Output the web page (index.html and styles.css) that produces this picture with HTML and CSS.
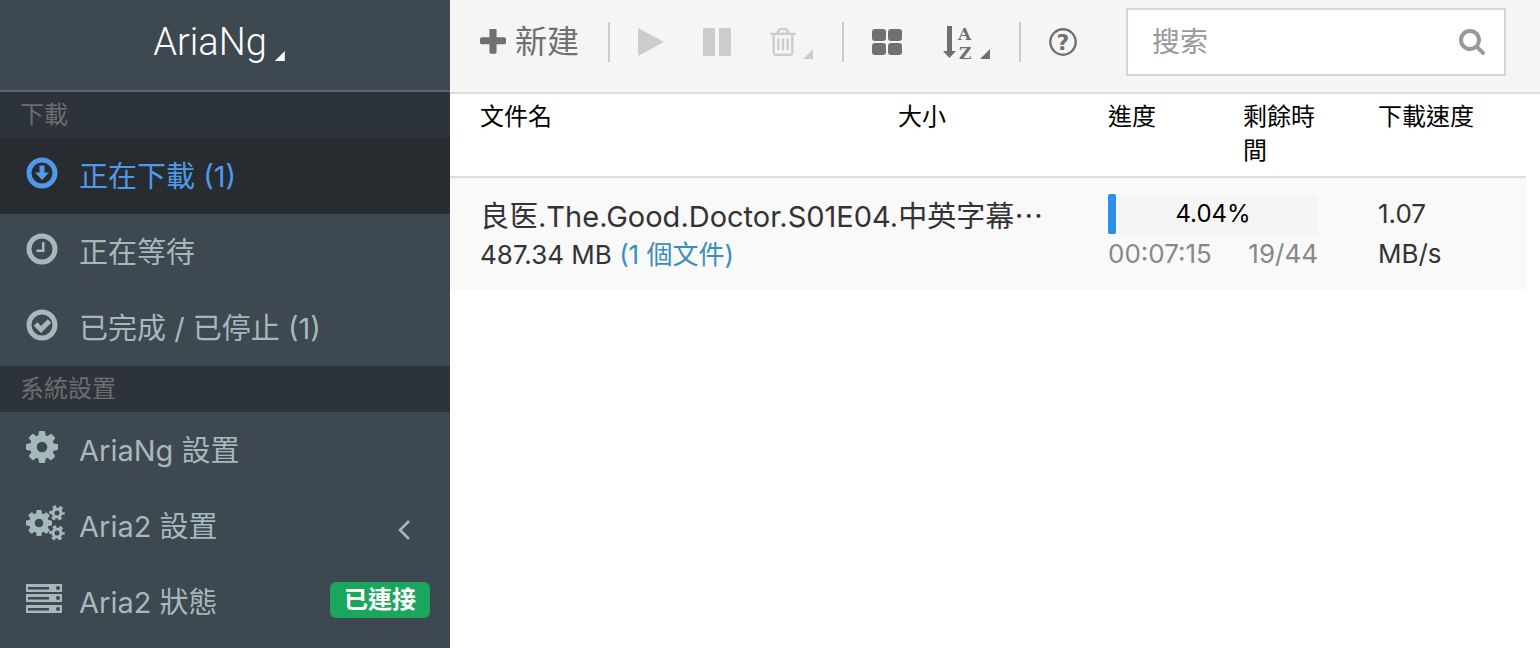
FILE: index.html
```
<!DOCTYPE html>
<html lang="zh-Hant">
<head>
  <meta charset="UTF-8">
  <meta name="viewport" content="width=device-width, initial-scale=1">
  <title>AriaNg</title>
  <link rel="stylesheet" href="styles.css">
</head>
<body>
  <svg class="defs" aria-hidden="true">
    <symbol id="cog" viewBox="128 128 1536 1536">
      <path d="M1152 896q0-106-75-181t-181-75-181 75-75 181 75 181 181 75 181-75 75-181zm512-109v222q0 12-8 23t-20 13l-185 28q-19 54-39 91 35 50 107 138 10 12 10 25t-9 23q-27 37-99 108t-94 71q-12 0-26-9l-138-108q-44 23-91 38-16 136-29 186-7 28-36 28h-222q-14 0-24.5-8.5t-11.5-21.5l-28-184q-49-16-90-37l-141 107q-10 9-25 9-14 0-25-11-126-114-165-168-7-10-7-23 0-12 8-23 15-21 51-66.5t54-70.5q-27-50-41-99l-183-27q-13-2-21-12.5t-8-23.5v-222q0-12 8-23t19-13l186-28q14-46 39-92-40-57-107-138-10-12-10-24 0-10 9-23 26-36 98.5-107.5t94.5-71.5q13 0 26 10l138 107q44-23 91-38 16-136 29-186 7-28 36-28h222q14 0 24.5 8.5t11.5 21.5l28 184q49 16 90 37l142-107q9-9 24-9 13 0 25 10 129 119 165 170 7 8 7 22 0 12-8 23-15 21-51 66.5t-54 70.5q26 50 41 98l183 28q13 2 21 12.5t8 23.5z"/>
    </symbol>
  </svg>

  <aside class="sidebar">
    <a class="logo" href="#about">AriaNg<i class="caret"></i></a>
    <nav>
      <h2 class="nav-header">下載</h2>
      <ul class="menu">
        <li><a class="active" href="#downloading">
          <svg class="icon" viewBox="0 0 40 36"><circle cx="16" cy="18" r="13" fill="none" stroke="currentColor" stroke-width="5"/><path d="M13.500 10.500h5v7h4.500L16 25L9 17.500h4.500z"/></svg>
          <span>正在下載 (1)</span>
        </a></li>
        <li><a href="#waiting">
          <svg class="icon" viewBox="0 0 40 36"><circle cx="16" cy="18" r="13" fill="none" stroke="currentColor" stroke-width="5"/><path d="M16 11h2.500v10h-8v-2.500H16z"/></svg>
          <span>正在等待</span>
        </a></li>
        <li><a href="#stopped">
          <svg class="icon" viewBox="0 0 40 36"><circle cx="16" cy="18" r="13" fill="none" stroke="currentColor" stroke-width="5"/><path d="M9.500 17L15 22.500L23.500 14" fill="none" stroke="currentColor" stroke-width="5"/></svg>
          <span>已完成 / 已停止 (1)</span>
        </a></li>
      </ul>
      <h2 class="nav-header">系統設置</h2>
      <ul class="menu">
        <li><a href="#settings-ariang">
          <svg class="icon" viewBox="0 0 40 36"><use href="#cog" x="0" y="2" width="32" height="32"/></svg>
          <span>AriaNg 設置</span>
        </a></li>
        <li><a href="#settings-aria2">
          <svg class="icon" viewBox="0 0 40 36">
            <use href="#cog" x="0" y="5" width="26" height="26"/>
            <g fill="none" stroke="currentColor">
              <circle cx="31" cy="8" r="4" stroke-width="3"/>
              <circle cx="31" cy="8" r="6" stroke-width="3.500" stroke-dasharray="3.200 3.083" stroke-dashoffset="1.600"/>
              <circle cx="31" cy="28" r="4" stroke-width="3"/>
              <circle cx="31" cy="28" r="6" stroke-width="3.500" stroke-dasharray="3.200 3.083" stroke-dashoffset="1.600"/>
            </g>
          </svg>
          <span>Aria2 設置</span>
          <svg class="angle" viewBox="0 0 12 20"><path d="M11 1L2 10L11 19" fill="none" stroke="currentColor" stroke-width="2.500"/></svg>
        </a></li>
        <li><a href="#status">
          <svg class="icon" viewBox="0 0 40 36"><path fill-rule="evenodd" d="M0 3h36v8H0zm2 3v2.500h21V6zm30-1a2 2 0 1 0 0 4 2 2 0 0 0 0-4zM0 13h36v8H0zm2 3v2.500h21V16zm30-1a2 2 0 1 0 0 4 2 2 0 0 0 0-4zM0 24h36v8H0zm2 3v2.500h21V27zm30-1a2 2 0 1 0 0 4 2 2 0 0 0 0-4z"/></svg>
          <span>Aria2 狀態</span>
          <span class="badge">已連接</span>
        </a></li>
      </ul>
    </nav>
  </aside>

  <div class="content">
    <header class="toolbar">
      <button class="tool new" type="button">
        <svg width="26" height="26" viewBox="192 192 1408 1408"><path d="M1600 736v192q0 40-28 68t-68 28h-416v416q0 40-28 68t-68 28h-192q-40 0-68-28t-28-68v-416h-416q-40 0-68-28t-28-68v-192q0-40 28-68t68-28h416v-416q0-40 28-68t68-28h192q40 0 68 28t28 68v416h416q40 0 68 28t28 68z"/></svg>
        <span>新建</span>
      </button>
      <span class="divider"></span>
      <button class="tool play" type="button" title="開始" disabled>
        <svg width="26" height="28" viewBox="0 0 26 28"><path d="M0 1Q0 0 1 .5L25 13.500Q26 14 25 14.500L1 27.500Q0 28 0 27z"/></svg>
      </button>
      <button class="tool pause" type="button" title="暫停" disabled>
        <svg width="28" height="28" viewBox="0 0 28 28"><rect width="12" height="28" rx="1"/><rect x="16" width="12" height="28" rx="1"/></svg>
      </button>
      <button class="tool" type="button" title="刪除" disabled>
        <svg width="26" height="28" viewBox="192 128 1408 1536"><path d="M704 736v576q0 14-9 23t-23 9h-64q-14 0-23-9t-9-23v-576q0-14 9-23t23-9h64q14 0 23 9t9 23zm256 0v576q0 14-9 23t-23 9h-64q-14 0-23-9t-9-23v-576q0-14 9-23t23-9h64q14 0 23 9t9 23zm256 0v576q0 14-9 23t-23 9h-64q-14 0-23-9t-9-23v-576q0-14 9-23t23-9h64q14 0 23 9t9 23zm128 724v-948h-896v948q0 22 7 40.500t14.500 27 10.500 8.500h832q3 0 10.500-8.500t14.500-27 7-40.500zm-672-1076h448l-48-117q-7-9-17-11h-317q-10 2-17 11zm928 32v64q0 14-9 23t-23 9h-96v948q0 83-47 143.500t-113 60.500h-832q-66 0-113-58.500t-47-141.500v-952h-96q-14 0-23-9t-9-23v-64q0-14 9-23t23-9h309l70-167q15-37 54-63t79-26h320q40 0 79 26t54 63l70 167h309q14 0 23 9t9 23z"/></svg>
        <i class="caret"></i>
      </button>
      <span class="divider"></span>
      <button class="tool layout" type="button" title="佈局">
        <svg width="30" height="26" viewBox="0 0 30 26"><rect width="14" height="12" rx="3"/><rect x="16" width="14" height="12" rx="3"/><rect y="14" width="14" height="12" rx="3"/><rect x="16" y="14" width="14" height="12" rx="3"/></svg>
      </button>
      <button class="tool" type="button" title="排序">
        <svg class="sort" width="30" height="42" viewBox="0 0 30 42"><path d="M4 5h5v25h4L6.500 37L0 30h4z"/><text x="15" y="19">A</text><text x="16" y="38">Z</text></svg>
        <i class="caret"></i>
      </button>
      <span class="divider"></span>
      <button class="tool" type="button" title="幫助">
        <svg class="help" width="28" height="28" viewBox="0 0 28 28"><circle cx="14" cy="14" r="12.700" fill="none" stroke="currentColor" stroke-width="2.400"/><text x="14" y="22" text-anchor="middle">?</text></svg>
      </button>
      <form class="search">
        <input type="search" placeholder="搜索" aria-label="搜索">
        <svg width="26" height="26" viewBox="64 128 1664 1664"><path d="M1216 832q0-185-131.500-316.500t-316.500-131.500-316.500 131.500-131.500 316.500 131.500 316.500 316.500 131.500 316.500-131.500 131.500-316.500zm512 832q0 52-38 90t-90 38q-54 0-90-38l-343-342q-179 124-399 124-143 0-273.500-55.500t-225-150-150-225-55.500-273.500 55.500-273.500 150-225 225-150 273.500-55.500 273.500 55.500 225 150 150 225 55.500 273.500q0 220-124 399l343 343q37 37 37 90z"/></svg>
      </form>
    </header>

    <main>
      <table class="tasks">
        <colgroup><col class="col-name"><col class="col-size"><col class="col-progress"><col class="col-remain"><col class="col-speed"></colgroup>
        <thead>
          <tr><th>文件名</th><th>大小</th><th>進度</th><th>剩餘時間</th><th>下載速度</th></tr>
        </thead>
        <tbody>
          <tr>
            <td colspan="2">
              <div class="task-name">良医.The.Good.Doctor.S01E04.中英字幕<span class="more">…</span></div>
              <div class="task-size">487.34 MB <a href="#files">(1 個文件)</a></div>
            </td>
            <td colspan="2">
              <div class="progress"><div class="bar" style="width: 4.04%"></div><span>4.04%</span></div>
              <div class="task-info"><span>00:07:15</span><span>19/44</span></div>
            </td>
            <td class="speed">1.07 MB/s</td>
          </tr>
        </tbody>
      </table>
    </main>
  </div>
</body>
</html>
```
FILE: styles.css
```
* {
  box-sizing: border-box;
}
body {
  margin: 0;
  display: flex;
  min-height: 100vh;
  background: #fff;
  color: #333;
  font-family: Inter, "Noto Sans CJK TC", sans-serif;
  font-size: 26px;
}
a {
  color: #3c8dbc;
  text-decoration: none;
}
svg {
  fill: currentColor;
  flex: none;
}
.defs {
  position: absolute;
  width: 0;
  height: 0;
}
.caret {
  width: 10px;
  height: 10px;
  background: currentColor;
  clip-path: polygon(100% 0, 100% 100%, 0 100%);
}

/* sidebar */
.sidebar {
  flex: none;
  width: 450px;
  background: #3d4851;
  color: #a5b8bc;
}
.logo {
  display: flex;
  align-items: center;
  justify-content: center;
  gap: 8px;
  height: 92px;
  padding: 0 12px 6px 0;
  border-bottom: 2px solid #5b676f;
  color: #fff;
  font-family: Roboto, sans-serif;
  font-weight: 300;
  font-size: 38px;
}
.logo .caret {
  margin-top: 28px;
}
.nav-header {
  margin: 0;
  padding: 0 20px;
  height: 46px;
  background: #2d333b;
  color: #6d6d6d;
  font-weight: 400;
  font-size: 24px;
  line-height: 46px;
}
.menu {
  margin: 0;
  padding: 0;
  list-style: none;
}
.menu a {
  display: flex;
  align-items: center;
  height: 76px;
  padding: 0 20px 4px 26px;
  color: inherit;
  font-size: 29px;
}
.menu .active {
  background: #272c30;
  color: #5199e8;
}
.icon {
  width: 40px;
  height: 36px;
  margin: 0 13px 2px 0;
}
.angle {
  width: 14px;
  height: 20px;
  margin: 12px 19px 0 auto;
}
.badge {
  margin-left: auto;
  padding: 0 14px;
  border-radius: 6px;
  background: #1aa65d;
  color: #fff;
  font-weight: 700;
  font-size: 24px;
  line-height: 36px;
}

/* toolbar */
.content {
  flex: 1;
  min-width: 0;
}
.toolbar {
  display: flex;
  align-items: center;
  height: 94px;
  padding: 0 34px 8px 30px;
  background: #f5f5f5;
  border-bottom: 2px solid #ddd;
}
.tool {
  display: flex;
  align-items: center;
  padding: 0;
  border: 0;
  background: none;
  color: #707070;
  font: inherit;
  font-size: 32px;
}
.tool:disabled {
  color: #ccc;
}
.tool .caret {
  margin: 24px 0 0 7px;
}
.new {
  gap: 9px;
}
.new span {
  line-height: 40px;
}
.divider {
  width: 2px;
  height: 40px;
  margin: 0 28px 0 29px;
  background: #ccc;
}
.pause {
  margin: 0 39px;
}
.layout {
  margin-right: 41px;
}
.sort text {
  font: 700 17px "DejaVu Serif", serif;
}
.help text {
  font: 700 22px "DejaVu Sans", sans-serif;
}
.search {
  display: flex;
  align-items: center;
  width: 380px;
  height: 68px;
  margin-left: auto;
  padding: 0 19px 0 24px;
  background: #fff;
  border: 2px solid #d2d6de;
  color: #999;
}
.search input {
  flex: 1;
  min-width: 0;
  padding: 0;
  border: 0;
  outline: 0;
  background: none;
  color: #555;
  font: inherit;
  font-size: 28px;
}
.search input::placeholder {
  color: #999;
}

/* task list */
main {
  padding-right: 14px;
}
.tasks {
  width: 100%;
  table-layout: fixed;
  border-collapse: collapse;
}
.col-size {
  width: 210px;
}
.col-progress,
.col-remain {
  width: 135px;
}
.col-speed {
  width: 178px;
}
.tasks th,
.tasks td {
  padding: 0 30px;
  text-align: left;
  vertical-align: top;
}
.tasks th {
  padding: 6px 30px 8px;
  border-bottom: 2px solid #ddd;
  color: #000;
  font-weight: 400;
  font-size: 24px;
  line-height: 34px;
}
.tasks td {
  height: 112px;
  padding: 16px 30px;
  background: #f9f9f9;
  line-height: 40px;
}
.task-name {
  overflow: hidden;
  font-size: 29px;
  white-space: nowrap;
}
.task-size {
  line-height: 36px;
}
.more {
  font-family: "Noto Sans CJK TC", sans-serif;
}
.progress {
  position: relative;
  height: 40px;
  background: #f5f5f5;
  color: #000;
  font-size: 24px;
  text-align: center;
}
.bar {
  position: absolute;
  top: 0;
  left: 0;
  height: 100%;
  border-radius: 2px;
  background: #2b90e6;
}
.task-info {
  display: flex;
  justify-content: space-between;
  color: #888;
}
```
